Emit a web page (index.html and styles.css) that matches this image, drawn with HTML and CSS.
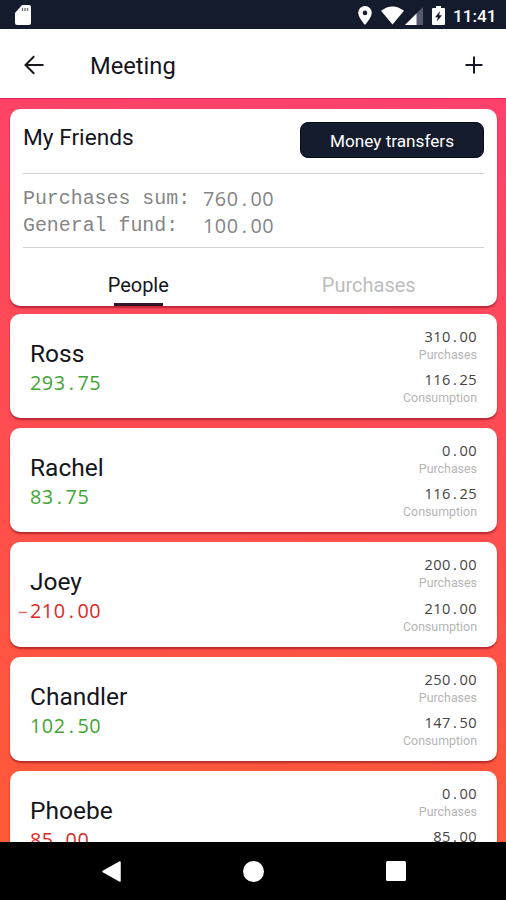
FILE: index.html
```
<!DOCTYPE html>
<html lang="en">

<head>
  <meta charset="utf-8">
  <meta name="viewport" content="width=device-width, initial-scale=1">
  <title>Meeting</title>
  <link rel="stylesheet" href="styles.css">
</head>

<body>
  <div class="status-bar">
    <svg class="sd" width="16" height="20" viewBox="0 0 16 20"><path d="M7 0H14Q16 0 16 2V18Q16 20 14 20H2Q0 20 0 18V8Z" fill="#fff"/><path d="M7.500 3v3M10 3v3M12.500 3v3" stroke="#777" stroke-width="1.4"/></svg>
    <svg class="pin" width="14" height="19" viewBox="0 0 14 19"><path fill="#fff" fill-rule="evenodd" d="M7 0a6.8 6.8 0 0 0-6.8 6.8C.2 11.500 7 19 7 19s6.800-7.500 6.800-12.200A6.800 6.800 0 0 0 7 0zm0 4.600a2.300 2.300 0 1 1 0 4.600 2.300 2.300 0 0 1 0-4.600z"/></svg>
    <svg class="wifi" width="23" height="19" viewBox="0 0 24 19"><path d="M0 4.500Q12-4.500 24 4.500L12 19Z" fill="#fff"/></svg>
    <svg class="signal" width="18" height="18" viewBox="0 0 18 18"><path d="M18 0V18H0Z" fill="#555b6c"/><path d="M11.500 6.500V18H0Z" fill="#fff"/></svg>
    <svg class="battery" width="13" height="19" viewBox="0 0 13 19"><path d="M4 0h5v2h3q1 0 1 1v15q0 1-1 1H1q-1 0-1-1V3q0-1 1-1h3z" fill="#fff"/><path d="M8 5L3 11.200h2.800L5 15.500l5-6.200H7.200z" fill="#141b2d"/></svg>
    <span class="clock">11:41</span>
  </div>

  <header class="app-bar">
    <svg width="20" height="20" viewBox="0 0 20 20"><path d="M19.500 10H1.500M10.200 1.200L1.500 10l8.700 8.800" fill="none" stroke="#16161c" stroke-width="2"/></svg>
    <h1>Meeting</h1>
    <svg width="18" height="18" viewBox="0 0 18 18"><path d="M9 .5v17M.5 9h17" stroke="#16162a" stroke-width="2"/></svg>
  </header>

  <main>
    <section class="summary">
      <div class="summary-top">
        <h2>My Friends</h2>
        <button>Money transfers</button>
      </div>
      <div class="totals">
        <div><span class="label">Purchases sum:</span><span class="num">760<i>.</i>00</span></div>
        <div><span class="label">General fund:</span><span class="num">100<i>.</i>00</span></div>
      </div>
      <nav class="tabs">
        <a class="active">People</a>
        <a>Purchases</a>
      </nav>
    </section>

    <article class="person">
      <div>
        <h3>Ross</h3>
        <p class="num plus">293<i>.</i>75</p>
      </div>
      <div class="stats">
        <p class="num">310<i>.</i>00</p><small>Purchases</small>
        <p class="num">116<i>.</i>25</p><small>Consumption</small>
      </div>
    </article>

    <article class="person">
      <div>
        <h3>Rachel</h3>
        <p class="num plus">83<i>.</i>75</p>
      </div>
      <div class="stats">
        <p class="num">0<i>.</i>00</p><small>Purchases</small>
        <p class="num">116<i>.</i>25</p><small>Consumption</small>
      </div>
    </article>

    <article class="person">
      <div>
        <h3>Joey</h3>
        <p class="num minus"><b>–</b>210<i>.</i>00</p>
      </div>
      <div class="stats">
        <p class="num">200<i>.</i>00</p><small>Purchases</small>
        <p class="num">210<i>.</i>00</p><small>Consumption</small>
      </div>
    </article>

    <article class="person">
      <div>
        <h3>Chandler</h3>
        <p class="num plus">102<i>.</i>50</p>
      </div>
      <div class="stats">
        <p class="num">250<i>.</i>00</p><small>Purchases</small>
        <p class="num">147<i>.</i>50</p><small>Consumption</small>
      </div>
    </article>

    <article class="person">
      <div>
        <h3>Phoebe</h3>
        <p class="num minus">85<i>.</i>00</p>
      </div>
      <div class="stats">
        <p class="num">0<i>.</i>00</p><small>Purchases</small>
        <p class="num">85<i>.</i>00</p>
      </div>
    </article>
  </main>

  <footer class="nav-bar">
    <svg width="19" height="21" viewBox="0 0 19 21"><path d="M18 1v19L1 10.500z" fill="#fff" stroke="#fff" stroke-width="1.500" stroke-linejoin="round"/></svg>
    <svg width="21" height="21" viewBox="0 0 21 21"><circle cx="10.500" cy="10.500" r="10.500" fill="#fff"/></svg>
    <svg width="20" height="20" viewBox="0 0 20 20"><rect width="20" height="20" rx="1.500" fill="#fff"/></svg>
  </footer>
</body>

</html>
```

FILE: styles.css
```
* {
  box-sizing: border-box;
}

body {
  margin: 0;
  height: 900px;
  display: flex;
  flex-direction: column;
  overflow: hidden;
  font-family: Roboto, sans-serif;
  color: #15151c;
}

h1, h2, h3, p {
  margin: 0;
  font-weight: 400;
}

svg {
  display: block;
  flex: none;
}

.status-bar {
  flex: none;
  height: 29px;
  display: flex;
  align-items: flex-start;
  padding: 5px 9px 0 15px;
  background: #141b2d;
  color: #fff;
}

.pin {
  margin: 1px 9px 0 auto;
}

.wifi {
  margin: 1px 1px 0 0;
}

.signal {
  margin: 2px 9px 0 0;
}

.battery {
  margin-top: 1px;
}

.clock {
  width: 44px;
  margin-left: 8px;
  font-size: 17.2px;
  font-weight: 500;
  line-height: 22px;
  white-space: nowrap;
}

.app-bar {
  flex: none;
  height: 69px;
  display: flex;
  align-items: center;
  padding: 3px 23px 0 24px;
  background: #fff;
}

.app-bar h1 {
  flex: 1;
  padding: 2px 0 0 46px;
  font-size: 23.7px;
  line-height: 30px;
}

main {
  flex: 1;
  min-height: 0;
  overflow: hidden;
  padding: 10px 9px 0 10px;
  border-top: 1px solid #e4205c;
  background: linear-gradient(187deg, #ff416c, #ff4b55 40%, #ff5a36);
}

.summary, .person {
  background: #fff;
  border-radius: 10px;
  box-shadow: 0 2px 2px rgba(110, 0, 20, .5);
}

.summary {
  height: 197px;
  margin-bottom: 7.5px;
  padding: 0 13px;
}

.summary-top {
  height: 64px;
  display: flex;
  justify-content: space-between;
  padding-top: 13px;
}

.summary-top h2 {
  font-size: 22.7px;
  line-height: 32px;
}

.summary-top button {
  width: 184px;
  height: 36px;
  padding: 2px 0 0;
  border: 1px solid #060b18;
  border-radius: 8px;
  background: #141b2d;
  color: #fff;
  font: 17.2px Roboto, sans-serif;
}

.totals {
  height: 75px;
  padding-top: 11px;
  border-top: 1px solid #d2d2d2;
  border-bottom: 1px solid #d2d2d2;
  color: #858585;
  line-height: 27px;
}

.totals div {
  display: flex;
}

.label {
  width: 180px;
  font-family: "Liberation Mono", monospace;
  font-size: 19.9px;
}

/* open sans figures set on a fixed 0.6em pitch */
.num {
  font-family: "Open Sans", sans-serif;
  font-size: 19.8px;
  letter-spacing: .028em;
}

.num i {
  font-style: normal;
  margin: 0 .153em;
}

.tabs {
  display: flex;
  height: 58px;
  font-size: 20px;
}

.tabs a {
  flex: 1;
  display: flex;
  flex-direction: column;
  align-items: center;
  justify-content: space-between;
  padding-top: 26px;
  line-height: 22px;
  color: #bdbdbd;
}

.tabs .active {
  color: #15151c;
}

.tabs .active::after {
  content: "";
  width: 49px;
  height: 3px;
  background: #35152a;
}

.person {
  display: flex;
  justify-content: space-between;
  height: 104.4px;
  margin-bottom: 10px;
  padding: 0 20px;
}

.person h3 {
  padding-top: 25px;
  font-size: 24.5px;
  line-height: 30px;
}

.person .plus, .person .minus {
  line-height: 28px;
}

.plus {
  color: #3fa535;
}

.minus {
  color: #dd2a25;
}

/* the sign hangs outside the column of figures */
.minus b {
  display: inline-block;
  width: 12px;
  margin-left: -12px;
  font-weight: 400;
  color: #e87773;
}

.stats {
  padding-top: 12px;
  text-align: right;
}

.stats .num {
  height: 20px;
  font-size: 14.6px;
  line-height: 20px;
  color: #444;
}

.stats small {
  display: block;
  height: 23.4px;
  font-size: 12.4px;
  line-height: 18px;
  color: #b5b5b5;
}

.nav-bar {
  flex: none;
  height: 58px;
  display: flex;
  align-items: center;
  justify-content: space-between;
  padding: 0 100px 0 102px;
  background: #000;
}
```
